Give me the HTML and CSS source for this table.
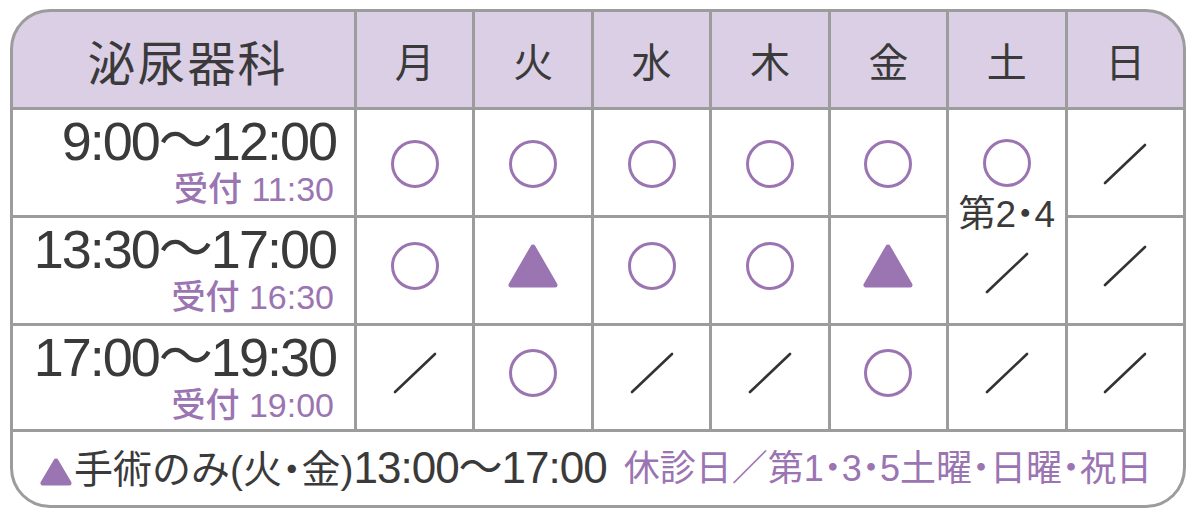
FILE: index.html
```html
<!DOCTYPE html>
<html lang="ja">
<head>
<meta charset="utf-8">
<title>泌尿器科 診療時間</title>
<link rel="stylesheet" href="styles.css">
</head>
<body>
<div class="schedule">
  <div class="cell head dept">泌尿器科</div>
  <div class="cell head">月</div>
  <div class="cell head">火</div>
  <div class="cell head">水</div>
  <div class="cell head">木</div>
  <div class="cell head">金</div>
  <div class="cell head">土</div>
  <div class="cell head">日</div>

  <div class="cell time"><span class="t">9:00〜12:00</span><span class="r">受付 11:30</span></div>
  <div class="cell mk r1"><svg class="circle" viewBox="0 0 50 50"><circle cx="25" cy="25" r="22.5"/></svg></div>
  <div class="cell mk r1"><svg class="circle" viewBox="0 0 50 50"><circle cx="25" cy="25" r="22.5"/></svg></div>
  <div class="cell mk r1"><svg class="circle" viewBox="0 0 50 50"><circle cx="25" cy="25" r="22.5"/></svg></div>
  <div class="cell mk r1"><svg class="circle" viewBox="0 0 50 50"><circle cx="25" cy="25" r="22.5"/></svg></div>
  <div class="cell mk r1"><svg class="circle" viewBox="0 0 50 50"><circle cx="25" cy="25" r="22.5"/></svg></div>
  <div class="cell sat">
    <svg class="circle" viewBox="0 0 50 50"><circle cx="25" cy="25" r="22.5"/></svg>
    <span class="sat-label">第2<span class="dot">・</span>4</span>
    <svg class="slash" viewBox="0 0 44 42"><line x1="2" y1="40" x2="42" y2="2"/></svg>
  </div>
  <div class="cell mk r1"><svg class="slash" viewBox="0 0 44 42"><line x1="2" y1="40" x2="42" y2="2"/></svg></div>

  <div class="cell time"><span class="t">13:30〜17:00</span><span class="r">受付 16:30</span></div>
  <div class="cell mk r2"><svg class="circle" viewBox="0 0 50 50"><circle cx="25" cy="25" r="22.5"/></svg></div>
  <div class="cell mk r2"><svg class="tri" viewBox="0 0 52 46"><polygon points="26,4 4,42 48,42"/></svg></div>
  <div class="cell mk r2"><svg class="circle" viewBox="0 0 50 50"><circle cx="25" cy="25" r="22.5"/></svg></div>
  <div class="cell mk r2"><svg class="circle" viewBox="0 0 50 50"><circle cx="25" cy="25" r="22.5"/></svg></div>
  <div class="cell mk r2"><svg class="tri" viewBox="0 0 52 46"><polygon points="26,4 4,42 48,42"/></svg></div>
  <div class="cell mk r2"><svg class="slash" viewBox="0 0 44 42"><line x1="2" y1="40" x2="42" y2="2"/></svg></div>

  <div class="cell time"><span class="t">17:00〜19:30</span><span class="r">受付 19:00</span></div>
  <div class="cell mk r3"><svg class="slash" viewBox="0 0 44 42"><line x1="2" y1="40" x2="42" y2="2"/></svg></div>
  <div class="cell mk r3"><svg class="circle" viewBox="0 0 50 50"><circle cx="25" cy="25" r="22.5"/></svg></div>
  <div class="cell mk r3"><svg class="slash" viewBox="0 0 44 42"><line x1="2" y1="40" x2="42" y2="2"/></svg></div>
  <div class="cell mk r3"><svg class="slash" viewBox="0 0 44 42"><line x1="2" y1="40" x2="42" y2="2"/></svg></div>
  <div class="cell mk r3"><svg class="circle" viewBox="0 0 50 50"><circle cx="25" cy="25" r="22.5"/></svg></div>
  <div class="cell mk r3"><svg class="slash" viewBox="0 0 44 42"><line x1="2" y1="40" x2="42" y2="2"/></svg></div>
  <div class="cell mk r3"><svg class="slash" viewBox="0 0 44 42"><line x1="2" y1="40" x2="42" y2="2"/></svg></div>

  <div class="cell foot">
    <span class="note"><svg class="tri-small" viewBox="0 0 32 28"><polygon points="16,3 3,25 29,25"/></svg>手術のみ(火<span class="dot">・</span>金)<span class="note-time">13:00〜17:00</span></span>
    <span class="closed">休診日／第1<span class="dot">・</span>3<span class="dot">・</span>5土曜<span class="dot">・</span>日曜<span class="dot">・</span>祝日</span>
  </div>
</div>
</body>
</html>
```

FILE: styles.css
```css
html, body {
  margin: 0;
  padding: 0;
  background: #ffffff;
}

body {
  padding: 9px 10px;
  font-family: "Liberation Sans", "Noto Sans CJK JP", sans-serif;
  color: #3a3a3a;
}

.schedule {
  box-sizing: border-box;
  width: 1176px;
  display: grid;
  grid-template-columns: 341px repeat(7, 1fr);
  grid-template-rows: 95px 105px 105px 103px 73px;
  gap: 3px;
  background: #9c9c9c;
  border: 3px solid #9c9c9c;
  border-radius: 40px;
  overflow: hidden;
}

.cell {
  background: #ffffff;
  display: flex;
  align-items: center;
  justify-content: center;
  box-sizing: border-box;
}

.head {
  background: #dbcfe6;
  font-family: "Noto Sans CJK JP", sans-serif;
  font-size: 40px;
  color: #3a3a3a;
}

.dept {
  font-size: 48px;
  letter-spacing: 2px;
  padding-left: 8px;
}

.time {
  flex-direction: column;
  align-items: flex-end;
  justify-content: flex-start;
  padding: 3px 18px 0 0;
}

.time .t {
  display: block;
  font-size: 54px;
  line-height: 56px;
  letter-spacing: -2px;
  color: #3a3a3a;
}

.time .r {
  display: block;
  margin-top: 2px;
  margin-right: 2px;
  font-size: 34px;
  line-height: 36px;
  font-weight: 500;
  color: #9b74b2;
}

.mk.r1 {
  padding-top: 3px;
}

.mk.r2,
.mk.r3 {
  padding-bottom: 9px;
}

.circle {
  width: 50px;
  height: 50px;
  display: block;
}

.circle circle {
  fill: none;
  stroke: #9b74b2;
  stroke-width: 3;
}

.tri {
  width: 52px;
  height: 46px;
  display: block;
}

.tri polygon,
.tri-small polygon {
  fill: #9b74b2;
  stroke: #9b74b2;
  stroke-width: 5;
  stroke-linejoin: round;
}

.tri-small {
  width: 32px;
  height: 28px;
  margin-right: 2px;
  vertical-align: -3px;
}

.slash {
  width: 44px;
  height: 42px;
  display: block;
}

.slash line {
  stroke: #333333;
  stroke-width: 2.6;
  stroke-linecap: round;
}

.sat {
  grid-row: span 2;
  flex-direction: column;
  justify-content: flex-start;
  padding-top: 28px;
}

.sat-label {
  display: block;
  margin-top: 9px;
  font-size: 37px;
  line-height: 36px;
  color: #3a3a3a;
}

.sat .slash {
  margin-top: 19px;
}

.dot {
  font-feature-settings: "halt";
}

.foot {
  grid-column: 1 / -1;
  justify-content: space-between;
  padding: 0 31px 0 27px;
}

.note {
  font-size: 39px;
  line-height: 44px;
  color: #3a3a3a;
  white-space: nowrap;
}

.note-time {
  font-size: 44px;
  letter-spacing: -1px;
}

.closed {
  font-size: 36px;
  line-height: 44px;
  color: #9b74b2;
  white-space: nowrap;
}
```
